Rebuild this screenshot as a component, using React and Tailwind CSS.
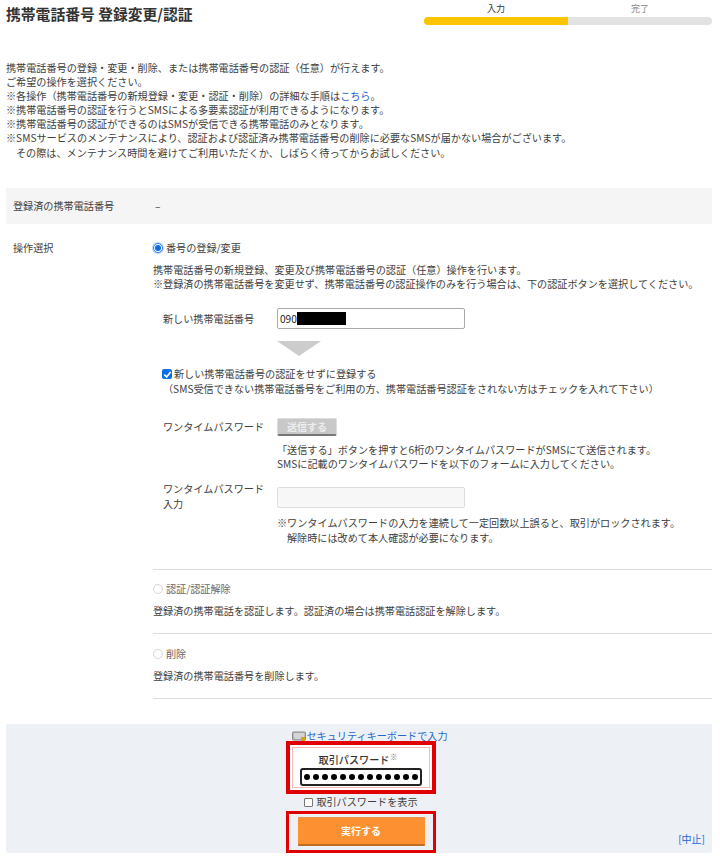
import React from 'react';

const Divider = ({ className = '' }) => <div className={`h-px bg-[#ddd] ${className}`} />;

const Radio = ({ on }) => (
  <span
    className={`w-[10px] h-[10px] rounded-full shrink-0 border flex items-center justify-center bg-white ${
      on ? 'border-[#2b7de9] shadow-[0_0_1px_1px_#bcd8fa]' : 'border-[#d5d5d5]'
    }`}
  >
    {on && <span className="w-[6px] h-[6px] rounded-full bg-[#0a6ee6]" />}
  </span>
);

const dots = Array.from({ length: 13 });

export default function App() {
  return (
    <div className="w-[720px] h-[857px] bg-white overflow-hidden pl-[6px] pr-[8px] text-[10.13px] leading-[14.1px] text-[#3d3d3d] font-['Noto_Sans_CJK_JP',sans-serif]">
      {/* header */}
      <div className="flex justify-between h-[61px]">
        <h1 className="text-[14.8px] leading-[20px] pt-[4px] font-bold text-[#333]">携帯電話番号 登録変更/認証</h1>
        <div className="w-[288px] pt-[3px]">
          <div className="flex text-[9px] leading-[12px] h-[14px] text-center">
            <span className="flex-1 text-[#333]">入力</span>
            <span className="flex-1 text-[#888]">完了</span>
          </div>
          <div className="flex h-[8px] rounded-full overflow-hidden bg-[#e2e2e2]">
            <div className="w-1/2 bg-[#fdc500]" />
          </div>
        </div>
      </div>

      {/* intro */}
      <div className="h-[127px]">
        <p>携帯電話番号の登録・変更・削除、または携帯電話番号の認証（任意）が行えます。</p>
        <p>ご希望の操作を選択ください。</p>
        <p>※各操作（携帯電話番号の新規登録・変更・認証・削除）の詳細な手順は<span className="text-[#1f66d1]">こちら</span>。</p>
        <p>※携帯電話番号の認証を行うとSMSによる多要素認証が利用できるようになります。</p>
        <p>※携帯電話番号の認証ができるのはSMSが受信できる携帯電話のみとなります。</p>
        <p>※SMSサービスのメンテナンスにより、認証および認証済み携帯電話番号の削除に必要なSMSが届かない場合がございます。</p>
        <p className="pl-[10px]">その際は、メンテナンス時間を避けてご利用いただくか、しばらく待ってからお試しください。</p>
      </div>

      {/* registered number */}
      <div className="flex items-center h-[36px] bg-[#f5f5f5] pl-[7px]">
        <span className="w-[142px]">登録済の携帯電話番号</span>
        <span>–</span>
      </div>

      {/* operation */}
      <div className="flex pl-[7px] pt-[17px]">
        <div className="w-[140px] shrink-0">操作選択</div>
        <div className="flex-1">
          <label className="flex items-center gap-[3px] h-[14px]">
            <Radio on />
            番号の登録/変更
          </label>
          <p className="mt-[8px]">携帯電話番号の新規登録、変更及び携帯電話番号の認証（任意）操作を行います。</p>
          <p>※登録済の携帯電話番号を変更せず、携帯電話番号の認証操作のみを行う場合は、下の認証ボタンを選択してください。</p>

          <div className="pl-[10px] mt-[17px]">
            <div className="flex items-center h-[21px]">
              <span className="w-[114px]">新しい携帯電話番号</span>
              <div className="w-[188px] h-[21px] border border-[#aaa] rounded-[2px] flex items-center pl-[2px] text-[#222]">
                090<span className="w-[49px] h-[13px] bg-black" />
              </div>
            </div>
            <div className="flex justify-start pl-[114px] mt-[12px]">
              <span className="w-0 h-0 border-x-[22px] border-x-transparent border-t-[15px] border-t-[#ccc]" />
            </div>
            <label className="flex items-center gap-[2px] mt-[11px] h-[14px] -ml-[1px]">
              <span className="w-[10px] h-[10px] bg-[#0a6ee6] rounded-[2px] flex items-center justify-center shrink-0">
                <svg viewBox="0 0 10 10" className="w-[9px] h-[9px]" fill="none" stroke="white" strokeWidth="1.8">
                  <path d="M1.5 5.2 4 7.8 8.5 2.2" />
                </svg>
              </span>
              新しい携帯電話番号の認証をせずに登録する
            </label>
            <p className="mt-px">（SMS受信できない携帯電話番号をご利用の方、携帯電話番号認証をされない方はチェックを入れて下さい）</p>

            <div className="flex mt-[22px]">
              <span className="w-[114px] shrink-0 leading-[18px]">ワンタイムパスワード</span>
              <div>
                <button className="block w-[60px] h-[18px] bg-[#c8c8c8] border border-[#ddd] border-b-2 border-b-[#777] rounded-[2px] text-[10px] font-bold text-[#eee]">送信する</button>
                <p className="mt-[7px]">「送信する」ボタンを押すと6桁のワンタイムパスワードがSMSにて送信されます。</p>
                <p>SMSに記載のワンタイムパスワードを以下のフォームに入力してください。</p>
              </div>
            </div>

            <div className="flex mt-[11px]">
              <span className="w-[114px] shrink-0">ワンタイムパスワード<br />入力</span>
              <div>
                <div className="w-[188px] h-[21px] mt-[5px] bg-[#f7f7f7] border border-[#ddd] rounded-[2px]" />
                <p className="mt-[8px]">※ワンタイムパスワードの入力を連続して一定回数以上誤ると、取引がロックされます。</p>
                <p className="pl-[10px]">解除時には改めて本人確認が必要になります。</p>
              </div>
            </div>
          </div>

          <Divider className="mt-[24px]" />
          <label className="flex items-center gap-[3px] h-[14px] mt-[12px] text-[#666]">
            <Radio />
            認証/認証解除
          </label>
          <p className="mt-[8px]">登録済の携帯電話を認証します。認証済の場合は携帯電話認証を解除します。</p>
          <Divider className="mt-[15px]" />
          <label className="flex items-center gap-[3px] h-[14px] mt-[13px] text-[#666]">
            <Radio />
            削除
          </label>
          <p className="mt-[8px]">登録済の携帯電話番号を削除します。</p>
          <Divider className="mt-[15px]" />
        </div>
      </div>

      {/* submit */}
      <div className="relative mt-[25px] h-[129px] pl-[4px] bg-[#edf1f6] rounded-[2px] flex flex-col items-center">
        <div className="h-[17px] flex items-end text-[#1f66d1] text-[10.13px] leading-[14px] translate-x-[9px] translate-y-[2px]">
          <svg viewBox="0 0 14 11" className="w-[14px] h-[11px] mb-px">
            <rect x="0.5" y="1" width="13" height="8" rx="1" fill="#bbb" stroke="#888" />
            <path d="M2 3h10M2 5h10M3 7h8" stroke="#eee" />
            <rect x="9" y="6" width="4" height="4" fill="#d4a017" />
          </svg>
          セキュリティキーボードで入力
        </div>
        <div className="relative w-[150px] h-[53px] border-[4px] border-[#e00000] bg-white p-[2px]">
          <div className="h-full border border-[#f8b8b8] flex flex-col items-center pt-[5px]">
            <span className="text-[10.13px] leading-[13px] font-medium text-[#333] -translate-x-[3px]">取引パスワード<sup className="text-[8px] leading-[0] text-[#777]">※</sup></span>
            <div className="w-[122px] h-[18px] mt-[2px] bg-white border-2 border-[#222] rounded-[3px] flex items-center justify-center gap-[3.3px]">
              {dots.map((_, i) => (
                <span key={i} className="w-[5.7px] h-[5.7px] rounded-full bg-black" />
              ))}
            </div>
          </div>
        </div>
        <label className="flex items-center gap-[3px] h-[17px]">
          <span className="w-[9px] h-[9px] bg-white border border-[#777] rounded-[1px]" />
          取引パスワードを表示
        </label>
        <div className="w-[150px] h-[42px] border-[3px] border-[#e00000] flex items-center justify-center">
          <button className="w-[127px] h-[29px] bg-[#fd9030] border-b-2 border-b-[#c06e20] border-t border-t-[#e8914a] text-white text-[10px] font-bold rounded-[1px]">実行する</button>
        </div>
        <a className="absolute right-[7px] bottom-[7px] text-[#1f66d1] text-[10px]">[中止]</a>
      </div>
    </div>
  );
}
